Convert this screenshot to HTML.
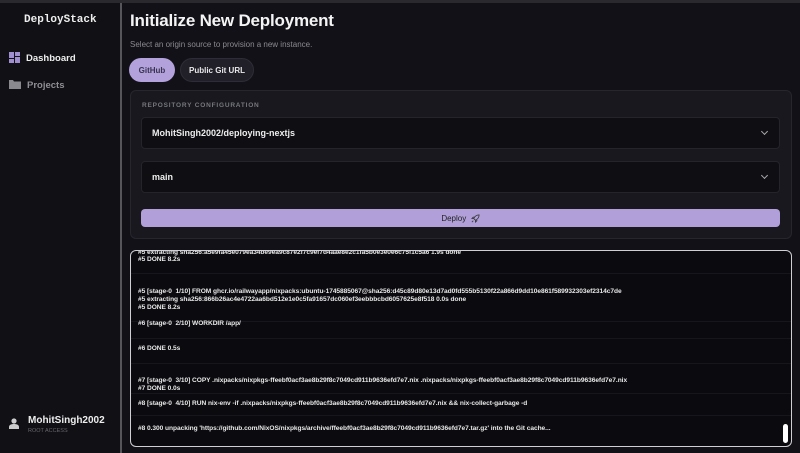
<!DOCTYPE html>
<html><head><meta charset="utf-8"><style>
*{box-sizing:border-box;margin:0;padding:0}
body{width:800px;height:453px;background:#121117;font-family:"Liberation Sans",sans-serif;overflow:hidden;position:relative;color:#eee}
.top{position:absolute;left:0;top:0;width:800px;height:3px;background:#2a2a2e}
.side{position:absolute;left:0;top:3px;width:120px;height:450px;background:#111015}
.div{position:absolute;left:120px;top:3px;width:2px;height:450px;background:#55555a}
.logo{position:absolute;left:24px;top:14px;font-family:"Liberation Mono",monospace;font-size:11px;color:#eee;font-weight:bold}
.nav{position:absolute;left:9px;font-size:9.5px;font-weight:bold}
h1{position:absolute;left:130px;top:11px;font-size:17px;font-weight:bold;color:#f4f4f4;letter-spacing:-.2px}
.sub{position:absolute;left:130px;top:40px;font-size:8px;color:#8a8a92}
.btn{position:absolute;top:58px;height:24px;border-radius:12px;font-size:8px;font-weight:bold;display:flex;align-items:center;justify-content:center}
.card{position:absolute;left:130px;top:90px;width:662px;height:149px;background:#18181e;border:1px solid #26262c;border-radius:6px}
.lbl{position:absolute;left:142px;top:102px;font-size:6.5px;letter-spacing:.8px;color:#77777f;font-weight:bold}
.sel{position:absolute;left:141px;width:639px;height:32px;background:#0f0e13;border:1px solid #24242a;border-radius:4px;font-size:9px;font-weight:bold;padding-left:10px;display:flex;align-items:center;color:#eee}
.chev{position:absolute;right:12px;top:11px;width:5px;height:5px;border-right:1.5px solid #aaa;border-bottom:1.5px solid #aaa;transform:rotate(45deg)}
.deploy{position:absolute;left:141px;top:209px;width:639px;height:18px;background:#b09fd8;border-radius:4px;font-size:8px;color:#222;display:flex;align-items:center;justify-content:center}
.log{position:absolute;left:130px;top:250px;width:662px;height:197px;background:#0b0a0f;border:1.5px solid #cfcfd4;border-radius:6px;overflow:hidden}
.l{position:absolute;left:7px;font-size:6.6px;font-weight:bold;color:#e8e8e8;white-space:nowrap;letter-spacing:-.05px}
.sep{position:absolute;left:0;width:100%;height:1px;background:#17161c}
.thumb{position:absolute;left:652px;top:173px;width:5px;height:19px;background:#fff;border-radius:3px}
</style></head><body>
<div class="top"></div>
<div class="side"></div><div class="div"></div>
<div class="logo">DeployStack</div>
<div class="nav" style="top:52px"><svg width="11" height="11" style="vertical-align:-2px;margin-right:6px"><rect x="0" y="0" width="5" height="6" fill="#9f8fd0"/><rect x="6" y="0" width="5" height="4" fill="#9f8fd0"/><rect x="0" y="7" width="5" height="4" fill="#9f8fd0"/><rect x="6" y="5" width="5" height="6" fill="#9f8fd0"/></svg><span style="color:#eee">Dashboard</span></div>
<div class="nav" style="top:79px"><svg width="12" height="10" style="vertical-align:-1px;margin-right:6px"><path d="M0 1h4l1 1.5h7V10H0z" fill="#8a8a8e"/></svg><span style="color:#8e8e94">Projects</span></div>
<svg style="position:absolute;left:9px;top:418px" width="10" height="11"><circle cx="5" cy="3" r="2.6" fill="#ccc"/><path d="M0 11v-2c0-2 2-3 5-3s5 1 5 3v2z" fill="#ccc"/></svg>
<div style="position:absolute;left:28px;top:415px;font-size:10px;font-weight:bold;color:#eee">MohitSingh2002</div>
<div style="position:absolute;left:28px;top:428px;font-size:5.5px;color:#66666c">ROOT ACCESS</div>

<h1>Initialize New Deployment</h1>
<div class="sub">Select an origin source to provision a new instance.</div>
<div class="btn" style="left:129px;width:46px;background:#b3a1db;color:#3a3450">GitHub</div>
<div class="btn" style="left:180px;width:74px;background:#211f28;border:1px solid #2e2c36;color:#e8e8e8">Public Git URL</div>
<div class="card"></div>
<div class="lbl">REPOSITORY CONFIGURATION</div>
<div class="sel" style="top:117px">MohitSingh2002/deploying-nextjs<span class="chev"></span></div>
<div class="sel" style="top:161px">main<span class="chev"></span></div>
<div class="deploy">Deploy &nbsp;<svg width="9" height="9" viewBox="0 0 10 10"><path d="M9 1C6 1 4 3 3 5l2 2c2-1 4-3 4-6zM3 5L1 5l1.5-1.5H4M5 7v2l1.5-1.5V6M2.5 7.5L1 9" fill="none" stroke="#333" stroke-width="0.9"/></svg></div>

<div class="log">
<div class="sep" style="top:22px"></div><div class="sep" style="top:70px"></div><div class="sep" style="top:87px"></div><div class="sep" style="top:112px"></div><div class="sep" style="top:142px"></div><div class="sep" style="top:164px"></div>
<div class="l" style="top:-2px">#5 extracting sha256:a5e9fa45e079ea34be9ea9c87e2f7c9ef7d4aae8e2c1fa5b0e3e0e6c75f1c5a6 1.9s done</div>
<div class="l" style="top:5px">#5 DONE 8.2s</div>
<div class="l" style="top:37px">#5 [stage-0&nbsp; 1/10] FROM ghcr.io/railwayapp/nixpacks:ubuntu-1745885067@sha256:d45c89d80e13d7ad0fd555b5130f22a866d9dd10e861f589932303ef2314c7de</div>
<div class="l" style="top:45px">#5 extracting sha256:866b26ac4e4722aa6bd512e1e0c5fa91657dc060ef3eebbbcbd6057625e8f518 0.0s done</div>
<div class="l" style="top:53px">#5 DONE 8.2s</div>
<div class="l" style="top:69px">#6 [stage-0&nbsp; 2/10] WORKDIR /app/</div>
<div class="l" style="top:94px">#6 DONE 0.5s</div>
<div class="l" style="top:126px">#7 [stage-0&nbsp; 3/10] COPY .nixpacks/nixpkgs-ffeebf0acf3ae8b29f8c7049cd911b9636efd7e7.nix .nixpacks/nixpkgs-ffeebf0acf3ae8b29f8c7049cd911b9636efd7e7.nix</div>
<div class="l" style="top:134px">#7 DONE 0.0s</div>
<div class="l" style="top:149px">#8 [stage-0&nbsp; 4/10] RUN nix-env -if .nixpacks/nixpkgs-ffeebf0acf3ae8b29f8c7049cd911b9636efd7e7.nix &amp;&amp; nix-collect-garbage -d</div>
<div class="l" style="top:174px">#8 0.300 unpacking 'https://github.com/NixOS/nixpkgs/archive/ffeebf0acf3ae8b29f8c7049cd911b9636efd7e7.tar.gz' into the Git cache...</div>
<div class="thumb"></div>
</div>
</body></html>
